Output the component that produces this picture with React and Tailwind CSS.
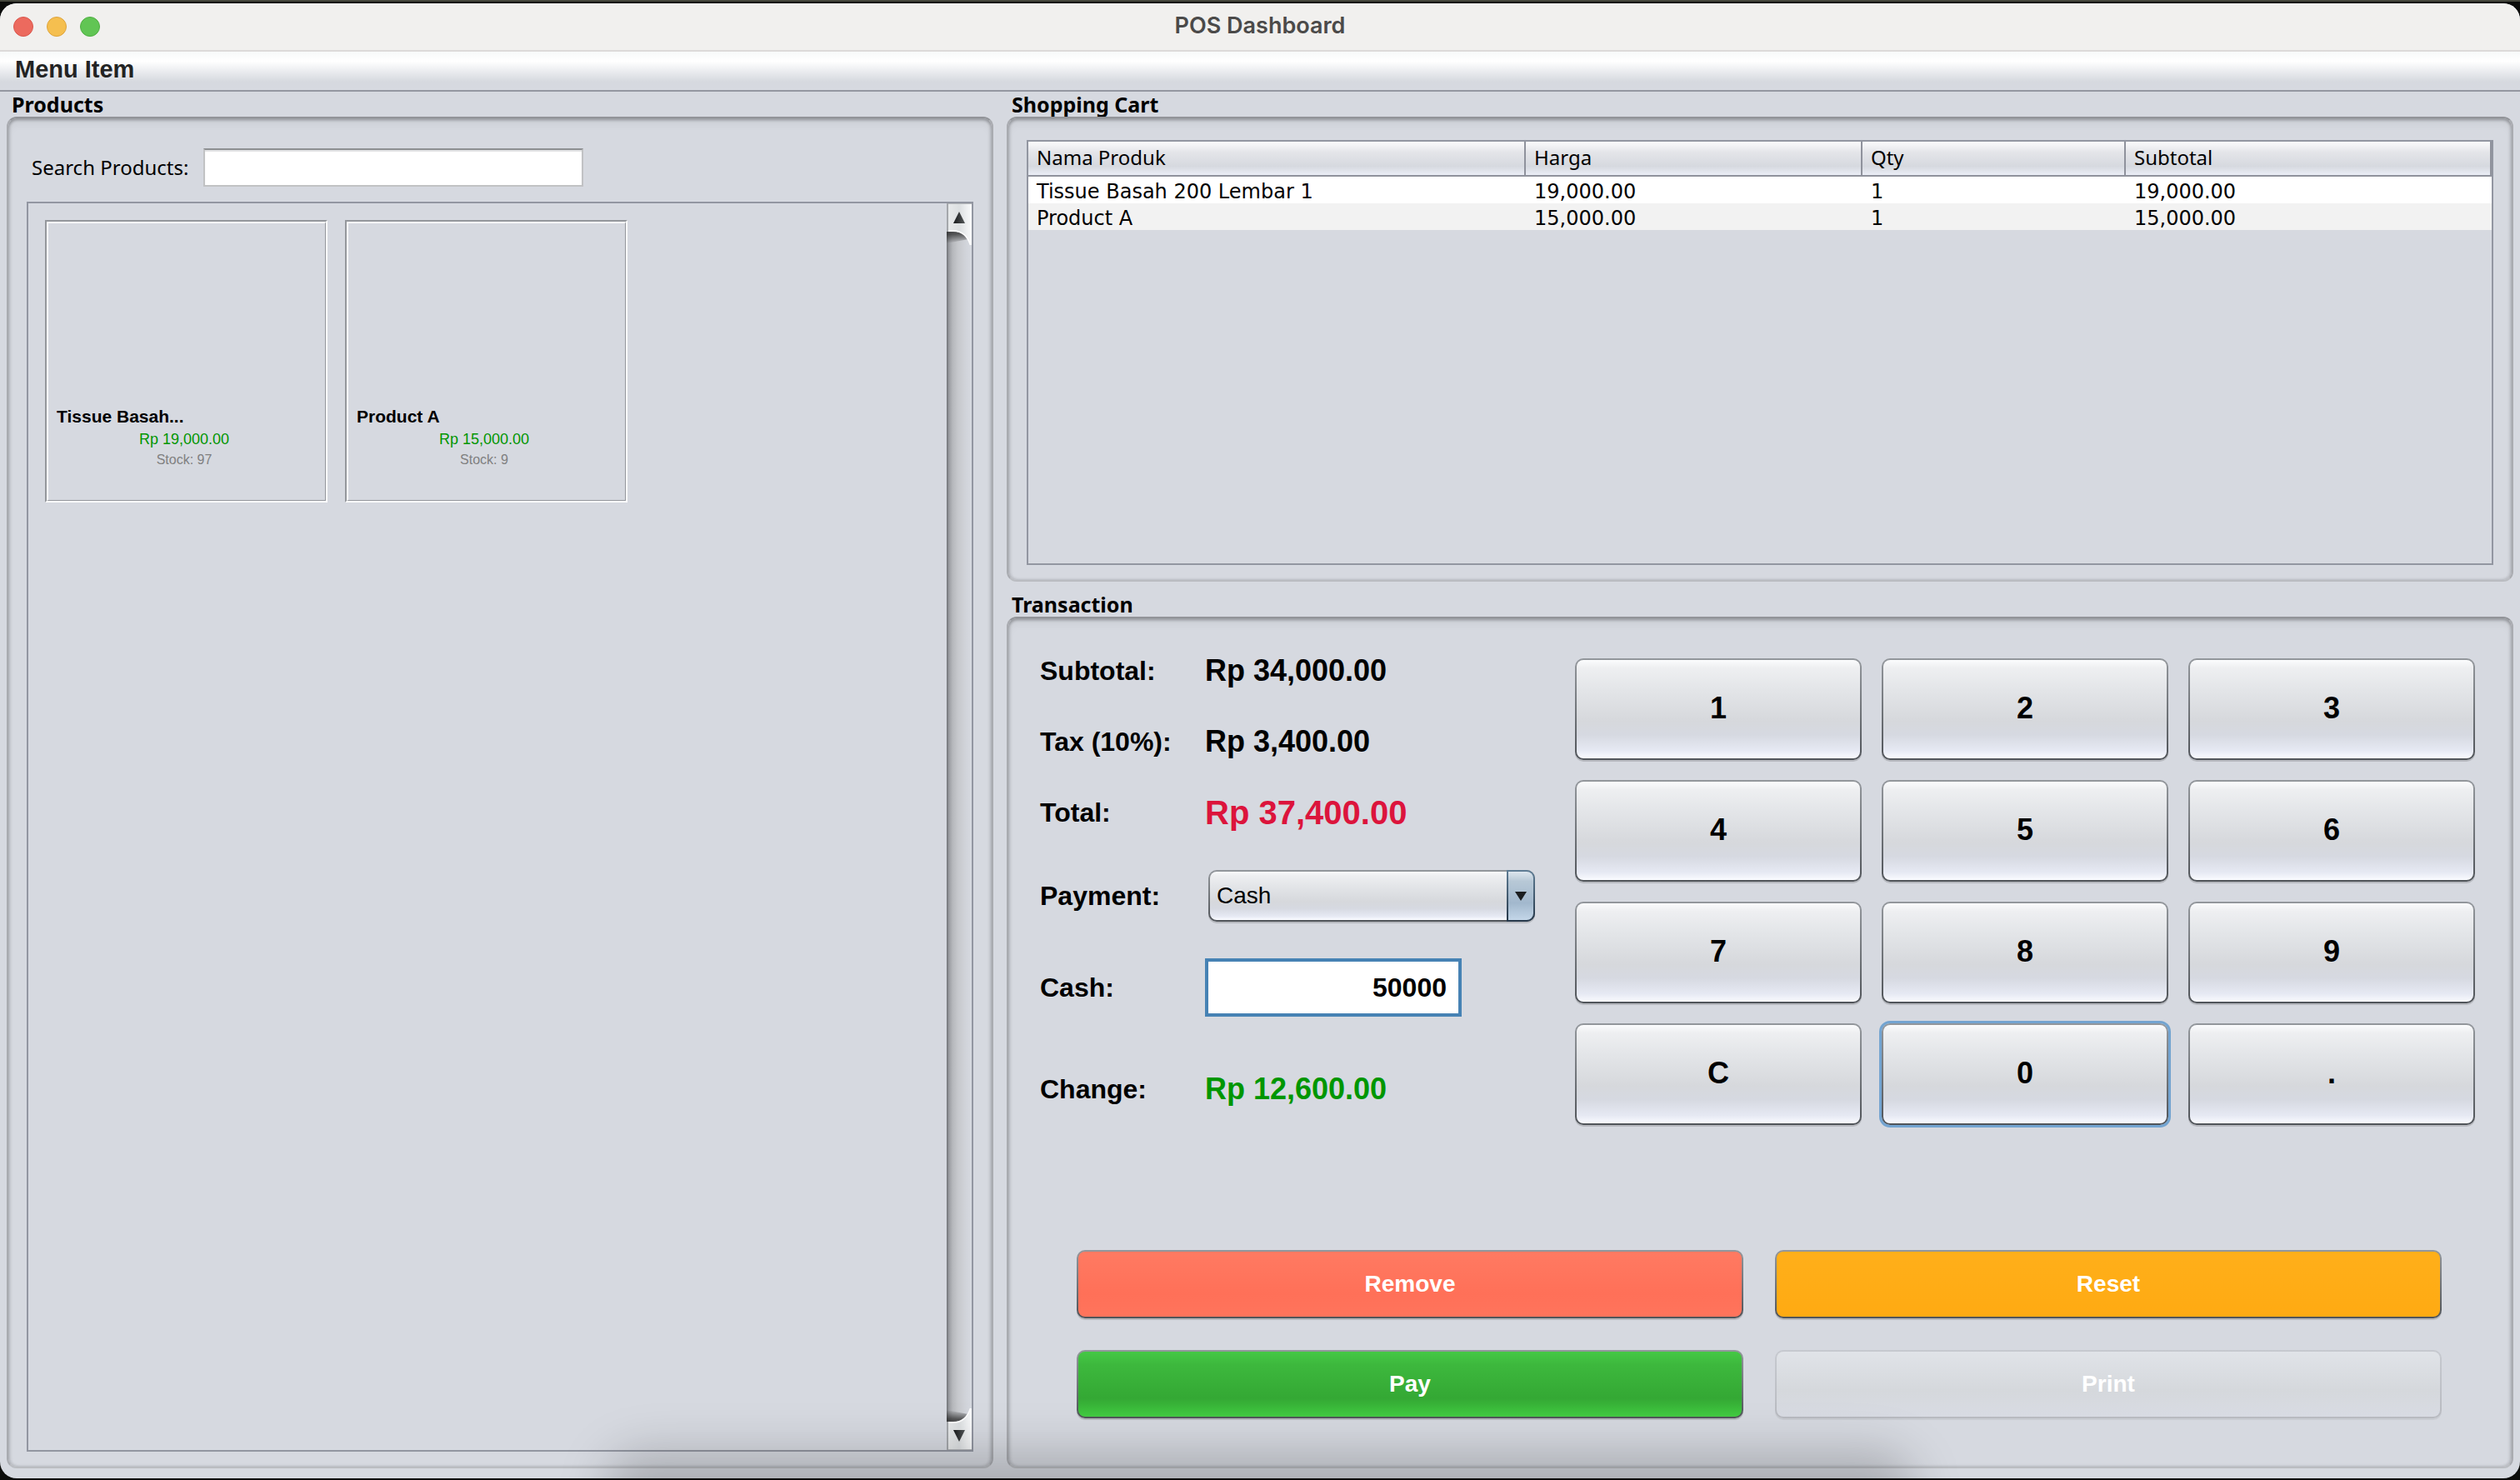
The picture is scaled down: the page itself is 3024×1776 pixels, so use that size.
import React from "react";

const products = [
  { name: "Tissue Basah...", price: "Rp 19,000.00", stock: "Stock: 97" },
  { name: "Product A", price: "Rp 15,000.00", stock: "Stock: 9" },
];

const cart = [
  ["Tissue Basah 200 Lembar 1", "19,000.00", "1", "19,000.00"],
  ["Product A", "15,000.00", "1", "15,000.00"],
];

const keys = ["1", "2", "3", "4", "5", "6", "7", "8", "9", "C", "0", "."];

const raised =
  "border-2 border-transparent shadow-[0_2px_0_rgba(0,0,0,0.15)] [background:linear-gradient(#fbfcfd,#eeeff1_8%,#e4e6e9_28%,#d6d8dc_62%,#d6d9e1_76%,#e6e9f3_92%,#fafbff)_padding-box,linear-gradient(#93979c,#505459)_border-box]";

function Panel({ title, className, children }) {
  return (
    <section className="flex min-h-0 flex-col">
      <h2 className="pl-1.5 font-['Noto_Sans',sans-serif] text-[25px] leading-[30px] font-bold text-black">
        {title}
      </h2>
      <div
        className={`min-h-0 flex-1 rounded-[12px] border-2 border-[#a9abb0] border-t-[#929499] border-b-[#babcc1] shadow-[inset_0_3px_3px_rgba(0,0,0,0.2),inset_0_8px_10px_rgba(0,0,0,0.04),inset_3px_0_3px_rgba(0,0,0,0.08),inset_-3px_0_3px_rgba(0,0,0,0.08),inset_0_-2px_3px_rgba(0,0,0,0.05)] ${className}`}
      >
        {children}
      </div>
    </section>
  );
}

function ScrollBar() {
  return (
    <div className="flex w-[30px] flex-col justify-between bg-[linear-gradient(90deg,#6f7175,#9b9da2_10%,#b6b8bc_24%,#c6c8cc_45%,#d2d5db_80%,#d6d9e0)]">
      <button type="button" aria-label="Scroll up" className="block">
        <svg width="30" height="54" viewBox="0 0 30 54" className="block">
          <defs>
            <linearGradient id="face" x1="0" x2="1" y1="0" y2="0">
              <stop offset="0" stopColor="#e9ebec" />
              <stop offset="0.5" stopColor="#dcdfe1" />
              <stop offset="1" stopColor="#fafbfc" />
            </linearGradient>
            <linearGradient id="shade" x1="0" x2="0" y1="0" y2="1">
              <stop offset="0.6" stopColor="#222" stopOpacity="0.7" />
              <stop offset="1" stopColor="#222" stopOpacity="0" />
            </linearGradient>
            <linearGradient id="tri" x1="0" x2="1" y1="0" y2="0">
              <stop offset="0" stopColor="#17191a" />
              <stop offset="1" stopColor="#54585a" />
            </linearGradient>
          </defs>
          <path d="M0 20H14C20 36 24 40 26 43L0 48Z" fill="url(#shade)" />
          <path d="M0 0H30V50H28C25 40 18 34 8 34H0Z" fill="url(#face)" />
          <path d="M2 33H8C18 33 25 39 28.500 50" fill="none" stroke="#fff" strokeWidth="1.500" />
          <path d="M0 0.500H30" stroke="#b4b7ba" />
          <path d="M1 0V34" stroke="#a4a7ab" strokeWidth="2" />
          <path d="M15 10L22 24H8Z" fill="url(#tri)" />
        </svg>
      </button>
      <button type="button" aria-label="Scroll down" className="block">
        <svg width="30" height="54" viewBox="0 0 30 54" className="block">
          <defs>
            <linearGradient id="shadeDown" x1="0" x2="0" y1="1" y2="0">
              <stop offset="0.6" stopColor="#222" stopOpacity="0.7" />
              <stop offset="1" stopColor="#222" stopOpacity="0" />
            </linearGradient>
          </defs>
          <path d="M0 34H14C20 18 24 14 26 11L0 6Z" fill="url(#shadeDown)" />
          <path d="M0 54H30V4H28C25 14 18 20 8 20H0Z" fill="url(#face)" />
          <path d="M2 21H8C18 21 25 15 28.500 4" fill="none" stroke="#fff" strokeWidth="1.500" />
          <path d="M0 53.500H30" stroke="#b4b7ba" />
          <path d="M1 20V54" stroke="#a4a7ab" strokeWidth="2" />
          <path d="M15 44L22 30H8Z" fill="url(#tri)" />
        </svg>
      </button>
    </div>
  );
}

function ProductCard({ name, price, stock }) {
  return (
    <article className="flex h-[339px] w-[339px] flex-col border-2 border-t-[#94979c] border-r-white border-b-white border-l-[#94979c]">
      <div className="flex flex-1 flex-col justify-end border-t-2 border-r border-b border-l-2 border-t-white border-r-[#94979c] border-b-[#94979c] border-l-white pr-4 pb-9 pl-2.5">
        <h3 className="text-[21px] leading-7 font-bold text-black">{name}</h3>
        <p className="text-center text-[18px] leading-[26px] text-[#009600]">{price}</p>
        <p className="text-center text-[16px] leading-6 text-[#808080]">{stock}</p>
      </div>
    </article>
  );
}

export default function App() {
  return (
    <div className="h-screen overflow-hidden bg-[#0b0c0a] pb-0.5 font-['Liberation_Sans',Arial,sans-serif]">
      <div className="h-1 border-t-2 border-[#45473c]" />
      <div className="relative flex h-[calc(100%-4px)] flex-col overflow-hidden rounded-[20px] bg-[#d6d9e0]">
        <header className="flex h-[58px] items-center border-b-2 border-[#dcdad9] bg-[#f1f0ee] px-4">
          <div className="flex flex-1 gap-4">
            <button type="button" aria-label="Close" className="size-6 rounded-full border border-[#d9574d] bg-[#ec6a5e]" />
            <button type="button" aria-label="Minimize" className="size-6 rounded-full border border-[#dda33c] bg-[#f5bf4f]" />
            <button type="button" aria-label="Zoom" className="size-6 rounded-full border border-[#4fae42] bg-[#61c554]" />
          </div>
          <h1 className="pb-0.5 font-['Inter',sans-serif] text-[27px] leading-8 font-semibold text-[#4b4a49]">POS Dashboard</h1>
          <div className="flex-1" />
        </header>

        <nav className="flex h-12 border-b-2 border-[#9497a1] bg-[linear-gradient(#f7f9f9,#ffffff_25%,#d6d9df_78%,#d6d9e0)] pl-[18px]">
          <button type="button" className="pb-1 text-[29px] leading-10 font-bold text-[#232323]">
            Menu Item
          </button>
        </nav>

        <main className="grid min-h-0 flex-1 grid-cols-[1184fr_1808fr] gap-4 px-2 pb-3">
          <Panel title="Products" className="flex flex-col pt-9 pr-[22px] pb-[18px] pl-[22px]">
            <form className="flex items-center gap-4 pl-1.5">
              <label htmlFor="search" className="w-[190px] font-['Noto_Sans',sans-serif] text-[24px] leading-8 whitespace-nowrap text-black">
                Search Products:
              </label>
              <input
                id="search"
                type="text"
                className="h-[46px] w-[456px] border-2 border-[#c1c2c4] border-t-[#8d8f92] bg-white px-2 text-[24px] shadow-[inset_0_2px_1px_#e0e1e3] outline-none"
              />
            </form>
            <div className="mt-[18px] flex min-h-0 flex-1 border-2 border-[#9296a1]">
              <div className="flex flex-1 items-start gap-[21px] p-5">
                {products.map((p) => (
                  <ProductCard key={p.name} {...p} />
                ))}
              </div>
              <ScrollBar />
            </div>
          </Panel>

          <div className="grid min-h-0 grid-rows-[588fr_1052fr] gap-3">
            <Panel title="Shopping Cart" className="flex pt-[26px] pr-[22px] pb-[18px] pl-[22px]">
              <div className="flex-1 border-2 border-[#9296a1]">
                <table className="w-full table-fixed border-collapse text-left text-[24px] text-black">
                  <colgroup>
                    <col className="w-[34%]" />
                    <col className="w-[23%]" />
                    <col className="w-[18%]" />
                    <col />
                  </colgroup>
                  <thead>
                    <tr className="bg-[linear-gradient(#fbfbfc,#e4e5e9_30%,#d6d9df_70%,#eef1fa)] font-['Noto_Sans',sans-serif] shadow-[inset_0_-2px_0_#6c707a]">
                      {["Nama Produk", "Harga", "Qty", "Subtotal"].map((h) => (
                        <th key={h} className="h-[42px] pb-1 pl-2.5 leading-9 font-normal shadow-[inset_-2px_-2px_0_#8f929c]">
                          {h}
                        </th>
                      ))}
                    </tr>
                  </thead>
                  <tbody className="font-['DejaVu_Sans',sans-serif]">
                    {cart.map((row) => (
                      <tr key={row[0]} className="bg-white even:bg-[#f2f2f2]">
                        {row.map((cell, i) => (
                          <td key={i} className="pt-1 pl-2.5 leading-7">
                            {cell}
                          </td>
                        ))}
                      </tr>
                    ))}
                  </tbody>
                </table>
              </div>
            </Panel>

            <Panel title="Transaction" className="flex flex-col pt-5 pb-[58px]">
              <div className="flex items-start pr-11 pl-[38px]">
                <div className="grid w-[642px] grid-cols-[198px_1fr] grid-rows-[86px_84px_86px_114px_106px_138px] items-center text-[32px] font-bold text-black">
                  <span>Subtotal:</span>
                  <output className="text-[36px]">Rp 34,000.00</output>
                  <span>Tax (10%):</span>
                  <output className="text-[36px]">Rp 3,400.00</output>
                  <span>Total:</span>
                  <output className="text-[40px] text-[#dc143c]">Rp 37,400.00</output>
                  <label htmlFor="payment">Payment:</label>
                  <div className="relative ml-1 h-[62px] w-[392px]">
                    <select
                      id="payment"
                      defaultValue="Cash"
                      className={`size-full appearance-none rounded-[10px] pl-2 text-[28px] font-normal text-black outline-none ${raised}`}
                    >
                      <option>Cash</option>
                    </select>
                    <span className="pointer-events-none absolute inset-y-0 right-0 flex w-[34px] items-center justify-center rounded-r-[10px] border-2 border-transparent [background:linear-gradient(#dde6ee,#b7c8d6_20%,#a2b8cd_65%,#c3d6e8)_padding-box,linear-gradient(#5f7d95,#26384a)_border-box]">
                      <svg width="14" height="11" viewBox="0 0 14 11">
                        <path d="M0 0H14L7 11Z" fill="#1b1e20" />
                      </svg>
                    </span>
                  </div>
                  <label htmlFor="cash">Cash:</label>
                  <input
                    id="cash"
                    type="text"
                    defaultValue="50000"
                    className="h-[70px] w-[308px] border-4 border-[#4682b4] bg-white pr-3.5 text-right text-[32px] font-bold text-black outline-none"
                  />
                  <span>Change:</span>
                  <output className="text-[36px] text-[#009600]">Rp 12,600.00</output>
                </div>

                <div className="mt-7 grid flex-1 grid-cols-3 gap-6">
                  {keys.map((k) => (
                    <button
                      key={k}
                      type="button"
                      className={`h-[122px] rounded-[10px] pb-0.5 text-[36px] font-bold text-black ${raised} ${
                        k === "0" ? "outline-3 outline-[#73a4d1]" : ""
                      }`}
                    >
                      {k}
                    </button>
                  ))}
                </div>
              </div>

              <div className="mt-auto grid grid-cols-2 gap-[38px] pr-[84px] pl-[82px] text-[28px] font-bold text-white">
                <button
                  type="button"
                  className="h-[82px] rounded-[10px] border-2 border-transparent shadow-[0_2px_0_rgba(0,0,0,0.15)] [background:linear-gradient(#ff7a62,#ff7058_65%,#ff745c)_padding-box,linear-gradient(#93979c,#505459)_border-box]"
                >
                  Remove
                </button>
                <button
                  type="button"
                  className="h-[82px] rounded-[10px] border-2 border-transparent shadow-[0_2px_0_rgba(0,0,0,0.15)] [background:linear-gradient(#ffaf1a,#ffaa12)_padding-box,linear-gradient(#93979c,#505459)_border-box]"
                >
                  Reset
                </button>
                <button
                  type="button"
                  className="h-[82px] rounded-[10px] border-2 border-transparent shadow-[0_2px_0_rgba(0,0,0,0.15)] [background:linear-gradient(#45c845,#3db83d_20%,#34a834_72%,#42cc42)_padding-box,linear-gradient(#93979c,#505459)_border-box]"
                >
                  Pay
                </button>
                <button
                  type="button"
                  disabled
                  className="h-[82px] rounded-[10px] border-2 border-transparent shadow-[0_2px_0_rgba(0,0,0,0.06)] [background:linear-gradient(#e0e3e8,#d5d8dc_60%,#d8dbe3)_padding-box,linear-gradient(#c6c9cf,#b8bac0)_border-box]"
                >
                  Print
                </button>
              </div>
            </Panel>
          </div>
        </main>
        <div className="pointer-events-none absolute inset-x-[24%] -bottom-16 h-24 rounded-full bg-black/20 blur-[28px]" />
      </div>
    </div>
  );
}
